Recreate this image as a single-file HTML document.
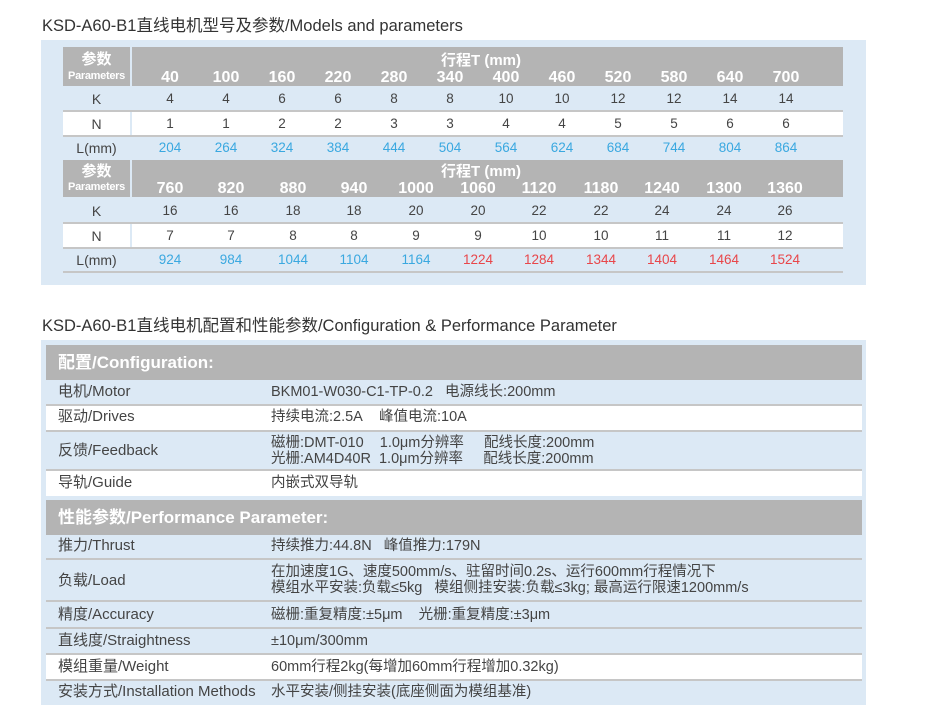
<!DOCTYPE html>
<html><head><meta charset="utf-8"><style>
*{margin:0;padding:0;box-sizing:border-box}
body{width:931px;height:713px;background:#fff;position:relative;overflow:hidden;font-family:"Liberation Sans","Noto Sans CJK SC",sans-serif;color:#444}
.a{position:absolute}
.t{font-size:16.5px;color:#333;white-space:nowrap}
.bg{background:#dce9f5}
.g{background:#b4b4b4}
.w{background:#fff}
.ln{position:absolute;height:2px;background:#c6c6c6}
.c{position:absolute;text-align:center;white-space:nowrap;font-size:13.5px;color:#444;width:60px;margin-left:-30px}
.h{color:#fff;font-weight:bold;font-size:16px;line-height:16px}
.ht{color:#fff;font-weight:bold;font-size:15px;line-height:15px}
.bl{color:#3aa8e0}.rd{color:#e8464a}
.lab{position:absolute;left:63px;width:67px;text-align:center;font-size:14px;color:#444}
.pl{position:absolute;left:63px;width:67px;text-align:center;color:#fff;font-weight:bold;line-height:1}
.r{position:absolute;left:46px;width:816px;line-height:16px}
.r .k{position:absolute;left:12px;font-size:15px;color:#444;white-space:nowrap}
.r .v{position:absolute;left:225px;font-size:14.5px;color:#444;white-space:nowrap;line-height:16px}
.sec{position:absolute;left:46px;width:816px;color:#fff;font-weight:bold;font-size:17px;padding-left:12px}
</style></head><body>
<div class="a t" style="left:42px;top:12px">KSD-A60-B1直线电机型号及参数/Models and parameters</div>
<div class="a bg" style="left:41px;top:40px;width:825px;height:245px"></div>
<div class="a g" style="left:63px;top:47px;width:67px;height:39px"></div>
<div class="a g" style="left:132px;top:47px;width:711px;height:39px"></div>
<div class="a w" style="left:63px;top:112px;width:67px;height:23px"></div>
<div class="a w" style="left:132px;top:112px;width:711px;height:23px"></div>
<div class="ln" style="left:63px;top:110px;width:780px"></div>
<div class="ln" style="left:63px;top:135px;width:780px"></div>
<div class="a g" style="left:63px;top:160px;width:67px;height:37px"></div>
<div class="a g" style="left:132px;top:160px;width:711px;height:37px"></div>
<div class="a w" style="left:63px;top:224px;width:67px;height:23px"></div>
<div class="a w" style="left:132px;top:224px;width:711px;height:23px"></div>
<div class="ln" style="left:63px;top:222px;width:780px"></div>
<div class="ln" style="left:63px;top:247px;width:780px"></div>
<div class="ln" style="left:63px;top:271px;width:780px"></div>
<div class="pl" style="top:52px;font-size:15px">参数</div>
<div class="pl" style="top:71px;font-size:11px;letter-spacing:-0.3px">Parameters</div>
<div class="pl" style="top:164px;font-size:15px">参数</div>
<div class="pl" style="top:182px;font-size:11px;letter-spacing:-0.3px">Parameters</div>
<div class="a ht" style="left:441px;top:53px">行程T (mm)</div>
<div class="a ht" style="left:441px;top:164px">行程T (mm)</div>
<div class="lab" style="top:91px">K</div><div class="lab" style="top:116px">N</div><div class="lab" style="top:140px">L(mm)</div>
<div class="lab" style="top:203px">K</div><div class="lab" style="top:228px">N</div><div class="lab" style="top:252px">L(mm)</div>
<div class="c h" style="left:170px;top:70px">40</div><div class="c h" style="left:226px;top:70px">100</div><div class="c h" style="left:282px;top:70px">160</div><div class="c h" style="left:338px;top:70px">220</div><div class="c h" style="left:394px;top:70px">280</div><div class="c h" style="left:450px;top:70px">340</div><div class="c h" style="left:506px;top:70px">400</div><div class="c h" style="left:562px;top:70px">460</div><div class="c h" style="left:618px;top:70px">520</div><div class="c h" style="left:674px;top:70px">580</div><div class="c h" style="left:730px;top:70px">640</div><div class="c h" style="left:786px;top:70px">700</div>
<div class="c" style="left:170px;top:91px">4</div><div class="c" style="left:226px;top:91px">4</div><div class="c" style="left:282px;top:91px">6</div><div class="c" style="left:338px;top:91px">6</div><div class="c" style="left:394px;top:91px">8</div><div class="c" style="left:450px;top:91px">8</div><div class="c" style="left:506px;top:91px">10</div><div class="c" style="left:562px;top:91px">10</div><div class="c" style="left:618px;top:91px">12</div><div class="c" style="left:674px;top:91px">12</div><div class="c" style="left:730px;top:91px">14</div><div class="c" style="left:786px;top:91px">14</div>
<div class="c" style="left:170px;top:116px">1</div><div class="c" style="left:226px;top:116px">1</div><div class="c" style="left:282px;top:116px">2</div><div class="c" style="left:338px;top:116px">2</div><div class="c" style="left:394px;top:116px">3</div><div class="c" style="left:450px;top:116px">3</div><div class="c" style="left:506px;top:116px">4</div><div class="c" style="left:562px;top:116px">4</div><div class="c" style="left:618px;top:116px">5</div><div class="c" style="left:674px;top:116px">5</div><div class="c" style="left:730px;top:116px">6</div><div class="c" style="left:786px;top:116px">6</div>
<div class="c bl" style="left:170px;top:140px">204</div><div class="c bl" style="left:226px;top:140px">264</div><div class="c bl" style="left:282px;top:140px">324</div><div class="c bl" style="left:338px;top:140px">384</div><div class="c bl" style="left:394px;top:140px">444</div><div class="c bl" style="left:450px;top:140px">504</div><div class="c bl" style="left:506px;top:140px">564</div><div class="c bl" style="left:562px;top:140px">624</div><div class="c bl" style="left:618px;top:140px">684</div><div class="c bl" style="left:674px;top:140px">744</div><div class="c bl" style="left:730px;top:140px">804</div><div class="c bl" style="left:786px;top:140px">864</div>
<div class="c h" style="left:170px;top:181px">760</div><div class="c h" style="left:231px;top:181px">820</div><div class="c h" style="left:293px;top:181px">880</div><div class="c h" style="left:354px;top:181px">940</div><div class="c h" style="left:416px;top:181px">1000</div><div class="c h" style="left:478px;top:181px">1060</div><div class="c h" style="left:539px;top:181px">1120</div><div class="c h" style="left:601px;top:181px">1180</div><div class="c h" style="left:662px;top:181px">1240</div><div class="c h" style="left:724px;top:181px">1300</div><div class="c h" style="left:785px;top:181px">1360</div>
<div class="c" style="left:170px;top:203px">16</div><div class="c" style="left:231px;top:203px">16</div><div class="c" style="left:293px;top:203px">18</div><div class="c" style="left:354px;top:203px">18</div><div class="c" style="left:416px;top:203px">20</div><div class="c" style="left:478px;top:203px">20</div><div class="c" style="left:539px;top:203px">22</div><div class="c" style="left:601px;top:203px">22</div><div class="c" style="left:662px;top:203px">24</div><div class="c" style="left:724px;top:203px">24</div><div class="c" style="left:785px;top:203px">26</div>
<div class="c" style="left:170px;top:228px">7</div><div class="c" style="left:231px;top:228px">7</div><div class="c" style="left:293px;top:228px">8</div><div class="c" style="left:354px;top:228px">8</div><div class="c" style="left:416px;top:228px">9</div><div class="c" style="left:478px;top:228px">9</div><div class="c" style="left:539px;top:228px">10</div><div class="c" style="left:601px;top:228px">10</div><div class="c" style="left:662px;top:228px">11</div><div class="c" style="left:724px;top:228px">11</div><div class="c" style="left:785px;top:228px">12</div>
<div class="c bl" style="left:170px;top:252px">924</div><div class="c bl" style="left:231px;top:252px">984</div><div class="c bl" style="left:293px;top:252px">1044</div><div class="c bl" style="left:354px;top:252px">1104</div><div class="c bl" style="left:416px;top:252px">1164</div><div class="c rd" style="left:478px;top:252px">1224</div><div class="c rd" style="left:539px;top:252px">1284</div><div class="c rd" style="left:601px;top:252px">1344</div><div class="c rd" style="left:662px;top:252px">1404</div><div class="c rd" style="left:724px;top:252px">1464</div><div class="c rd" style="left:785px;top:252px">1524</div>

<div class="a t" style="left:42px;top:312px">KSD-A60-B1直线电机配置和性能参数/Configuration &amp; Performance Parameter</div>
<div class="a bg" style="left:41px;top:340px;width:825px;height:365px"></div>
<div class="sec g" style="top:345px;height:35px;line-height:35px">配置/Configuration:</div>
<div class="r" style="top:380px;height:25px"><span class="k" style="top:4px">电机/Motor</span><span class="v" style="top:4px">BKM01-W030-C1-TP-0.2&nbsp;&nbsp;&nbsp;电源线长:200mm</span></div>
<div class="ln" style="left:46px;top:404px;width:816px"></div>
<div class="r w" style="top:406px;height:24px"><span class="k" style="top:3px">驱动/Drives</span><span class="v" style="top:3px">持续电流:2.5A&nbsp;&nbsp;&nbsp;&nbsp;峰值电流:10A</span></div>
<div class="ln" style="left:46px;top:430px;width:816px"></div>
<div class="r" style="top:432px;height:38px"><span class="k" style="top:11px">反馈/Feedback</span><span class="v" style="top:3px">磁栅:DMT-010&nbsp;&nbsp;&nbsp;&nbsp;1.0μm分辨率&nbsp;&nbsp;&nbsp;&nbsp;&nbsp;配线长度:200mm<br>光栅:AM4D40R&nbsp;&nbsp;1.0μm分辨率&nbsp;&nbsp;&nbsp;&nbsp;&nbsp;配线长度:200mm</span></div>
<div class="ln" style="left:46px;top:469px;width:816px"></div>
<div class="r w" style="top:471px;height:25px"><span class="k" style="top:4px">导轨/Guide</span><span class="v" style="top:4px">内嵌式双导轨</span></div>
<div class="sec g" style="top:500px;height:35px;line-height:35px">性能参数/Performance Parameter:</div>
<div class="r" style="top:535px;height:24px"><span class="k" style="top:3px">推力/Thrust</span><span class="v" style="top:3px">持续推力:44.8N&nbsp;&nbsp;&nbsp;峰值推力:179N</span></div>
<div class="ln" style="left:46px;top:558px;width:816px"></div>
<div class="r" style="top:560px;height:40px"><span class="k" style="top:13px">负载/Load</span><span class="v" style="top:4px">在加速度1G、速度500mm/s、驻留时间0.2s、运行600mm行程情况下<br>模组水平安装:负载≤5kg&nbsp;&nbsp;&nbsp;模组侧挂安装:负载≤3kg; 最高运行限速1200mm/s</span></div>
<div class="ln" style="left:46px;top:600px;width:816px"></div>
<div class="r" style="top:602px;height:25px"><span class="k" style="top:5px">精度/Accuracy</span><span class="v" style="top:5px">磁栅:重复精度:±5μm&nbsp;&nbsp;&nbsp;&nbsp;光栅:重复精度:±3μm</span></div>
<div class="ln" style="left:46px;top:627px;width:816px"></div>
<div class="r" style="top:629px;height:24px"><span class="k" style="top:4px">直线度/Straightness</span><span class="v" style="top:4px">±10μm/300mm</span></div>
<div class="ln" style="left:46px;top:653px;width:816px"></div>
<div class="r w" style="top:655px;height:24px"><span class="k" style="top:4px">模组重量/Weight</span><span class="v" style="top:4px">60mm行程2kg(每增加60mm行程增加0.32kg)</span></div>
<div class="ln" style="left:46px;top:679px;width:816px"></div>
<div class="r" style="top:681px;height:24px"><span class="k" style="top:3px">安装方式/Installation Methods</span><span class="v" style="top:3px">水平安装/侧挂安装(底座侧面为模组基准)</span></div>
</body></html>
